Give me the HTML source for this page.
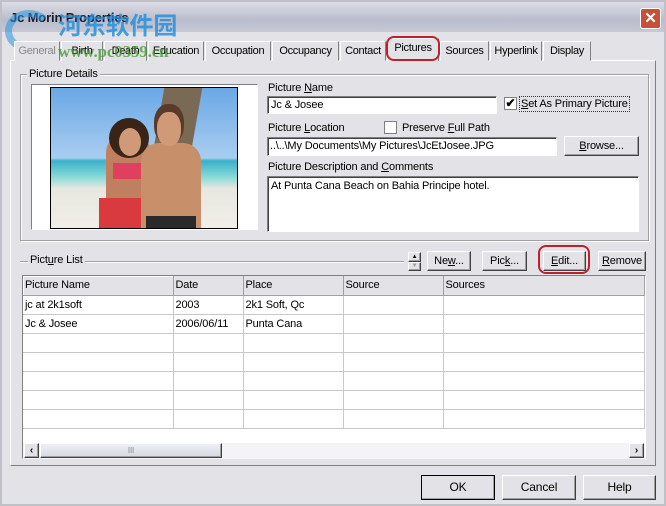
<!DOCTYPE html>
<html><head><meta charset="utf-8"><style>
*{box-sizing:border-box;margin:0;padding:0}
body{width:666px;height:506px;overflow:hidden;background:#e3e2e6;font-family:"Liberation Sans",sans-serif;font-size:11px;color:#000;position:relative;letter-spacing:-0.15px}
.a{position:absolute}
.raised{background:#e3e2e6;border:1px solid;border-color:#fff #404040 #404040 #fff;box-shadow:inset -1px -1px 0 #a0a0a0}
.sunk{background:#fff;border:1px solid;border-color:#808080 #fff #fff #808080;box-shadow:inset 1px 1px 0 #404040}
.btn{position:absolute;text-align:center;line-height:18px;font-size:11px}
.tab{position:absolute;top:41px;height:20px;line-height:18px;text-align:center;border:1px solid;border-color:#fff #808080 transparent #fff;background:#e3e2e6;font-size:11px;letter-spacing:-0.3px}
.grp{position:absolute;border:1px solid #a0a0a0;box-shadow:1px 1px 0 #fff, inset 1px 1px 0 #fff}
.lbl{position:absolute;background:#e3e2e6;padding:0 2px;font-size:11px}
td{border-right:1px solid #c8c8c8;border-bottom:1px solid #c8c8c8;height:19px;padding-left:2px;font-size:11px;white-space:nowrap}
u{text-decoration:underline}
</style></head><body>
<div class="a" style="left:0;top:0;width:666px;height:506px;border:2px solid #c0c0c8"></div>
<div class="a" style="left:2px;top:2px;width:662px;height:30px;background:linear-gradient(#dcdde6,#b9bccb 60%,#c6c8d4)"></div>
<div class="a" style="left:10px;top:10px;font-weight:bold;font-size:13px;color:#1a1a2a">Jc Morin Properties</div>
<div class="a" style="left:5px;top:10px;width:48px;height:42px;border-radius:50%;border:7px solid rgba(40,150,220,.55);border-right-color:transparent"></div>
<div class="a" style="left:58px;top:6px;font-family:'Noto Sans CJK SC',sans-serif;font-weight:bold;font-size:24px;color:rgba(30,140,220,.8)">河东软件园</div>
<div class="a" style="left:640px;top:8px;width:21px;height:21px;background:#c8503a;border:1px solid #fff;border-radius:3px;color:#fff;text-align:center;line-height:19px;font-size:15px;font-weight:bold">✕</div>
<div class="a" style="left:10px;top:60px;width:646px;height:406px;border:1px solid;border-color:#fff #808080 #808080 #fff"></div>
<div class="tab" style="left:14px;width:46px;color:#888">General</div>
<div class="tab" style="left:61px;width:42px">Birth</div>
<div class="tab" style="left:104px;width:43px">Death</div>
<div class="tab" style="left:148px;width:56px">Education</div>
<div class="tab" style="left:205px;width:66px">Occupation</div>
<div class="tab" style="left:272px;width:67px">Occupancy</div>
<div class="tab" style="left:340px;width:46px">Contact</div>
<div class="tab" style="left:387px;top:38px;height:23px;width:52px;border-bottom:none">Pictures</div>
<div class="tab" style="left:440px;width:49px">Sources</div>
<div class="tab" style="left:490px;width:52px">Hyperlink</div>
<div class="tab" style="left:543px;width:48px">Display</div>
<div class="a" style="left:386px;top:36px;width:54px;height:25px;border:2px solid #c0202a;border-radius:8px"></div>
<div class="a" style="left:58px;top:42px;font-family:'Liberation Serif',serif;font-weight:bold;font-size:17px;color:rgba(60,150,40,.75)">www.pc0359.cn</div>
<div class="grp" style="left:20px;top:74px;width:629px;height:167px"></div>
<div class="lbl" style="left:27px;top:68px">Picture Details</div>
<div class="a" style="left:31px;top:84px;width:227px;height:146px;background:#fff;border:1px solid;border-color:#808080 #fff #fff #808080"></div>
<div class="a" style="left:50px;top:87px;width:188px;height:142px;border:1px solid #000;background:linear-gradient(#6aa8e6 0%,#a9cdf0 50%,#3bb0c8 52%,#7ad6d6 62%,#e8e8e0 72%,#f0eee6 100%);overflow:hidden">
<div class="a" style="left:108px;top:0;width:38px;height:60px;background:#7a6a55;transform:skewX(-10deg)"></div>
<div class="a" style="left:55px;top:45px;width:45px;height:95px;background:#c08060;border-radius:20px 20px 0 0"></div>
<div class="a" style="left:58px;top:30px;width:40px;height:40px;background:#3a2418;border-radius:50%"></div>
<div class="a" style="left:68px;top:40px;width:22px;height:28px;background:#d09a78;border-radius:50%"></div>
<div class="a" style="left:48px;top:110px;width:45px;height:32px;background:#d83a40"></div>
<div class="a" style="left:62px;top:75px;width:35px;height:16px;background:#e04060"></div>
<div class="a" style="left:90px;top:55px;width:60px;height:87px;background:#c8906a;border-radius:18px 18px 0 0"></div>
<div class="a" style="left:103px;top:16px;width:30px;height:40px;background:#5a3a28;border-radius:45%"></div>
<div class="a" style="left:106px;top:24px;width:24px;height:34px;background:#d09a78;border-radius:45%"></div>
<div class="a" style="left:95px;top:128px;width:50px;height:14px;background:#2a2a2a"></div>
</div>
<div class="a" style="left:268px;top:82px">Picture <u>N</u>ame</div>
<div class="a sunk" style="left:267px;top:96px;width:230px;height:18px;padding:2px 3px">Jc &amp; Josee</div>
<div class="a" style="left:504px;top:97px;width:13px;height:13px;background:#fff;border:1px solid #808080;font-size:12px;line-height:11px;text-align:center;font-weight:bold">✔</div>
<div class="a" style="left:519px;top:96px;border:1px dotted #333;padding:0 1px;line-height:14px"><u>S</u>et As Primary Picture</div>
<div class="a" style="left:268px;top:122px">Picture <u>L</u>ocation</div>
<div class="a" style="left:384px;top:121px;width:13px;height:13px;background:#fff;border:1px solid #808080"></div>
<div class="a" style="left:402px;top:122px">Preserve <u>F</u>ull Path</div>
<div class="a sunk" style="left:267px;top:137px;width:290px;height:19px;padding:2px 2px">..\..\My Documents\My Pictures\JcEtJosee.JPG</div>
<div class="btn raised" style="left:564px;top:136px;width:75px;height:20px"><u>B</u>rowse...</div>
<div class="a" style="left:268px;top:161px">Picture Description and <u>C</u>omments</div>
<div class="a sunk" style="left:267px;top:176px;width:372px;height:56px;padding:3px 3px">At Punta Cana Beach on Bahia Principe hotel.</div>
<div class="a" style="left:20px;top:261px;width:384px;border-top:1px solid #a0a0a0;border-bottom:1px solid #fff"></div>
<div class="lbl" style="left:28px;top:254px">Pict<u>u</u>re List</div>
<div class="a raised" style="left:408px;top:252px;width:13px;height:10px;font-size:6px;text-align:center;line-height:8px">▲</div>
<div class="a raised" style="left:408px;top:262px;width:13px;height:9px;font-size:6px;text-align:center;line-height:7px;color:#999">▼</div>
<div class="btn raised" style="left:427px;top:251px;width:44px;height:20px">Ne<u>w</u>...</div>
<div class="btn raised" style="left:482px;top:251px;width:45px;height:20px">Pic<u>k</u>...</div>
<div class="btn raised" style="left:543px;top:251px;width:43px;height:20px"><u>E</u>dit...</div>
<div class="a" style="left:538px;top:245px;width:52px;height:29px;border:2px solid #c0202a;border-radius:8px"></div>
<div class="btn raised" style="left:598px;top:251px;width:48px;height:20px"><u>R</u>emove</div>
<div class="a" style="left:22px;top:275px;width:624px;height:184px;background:#fff;border:1px solid;border-color:#808080 #fff #fff #808080;overflow:hidden">
<table style="border-collapse:collapse;width:621px;table-layout:fixed">
<colgroup><col style="width:150px"><col style="width:70px"><col style="width:100px"><col style="width:100px"><col style="width:201px"></colgroup>
<tr style="background:#e3e2e6"><td style="height:18px;border-color:#a0a0a0;box-shadow:inset 1px 1px 0 #fff">Picture Name</td><td style="border-color:#a0a0a0">Date</td><td style="border-color:#a0a0a0">Place</td><td style="border-color:#a0a0a0">Source</td><td style="border-color:#a0a0a0">Sources</td></tr>
<tr><td>jc at 2k1soft</td><td>2003</td><td>2k1 Soft, Qc</td><td></td><td></td></tr>
<tr><td>Jc &amp; Josee</td><td>2006/06/11</td><td>Punta Cana</td><td></td><td></td></tr>
<tr><td></td><td></td><td></td><td></td><td></td></tr>
<tr><td></td><td></td><td></td><td></td><td></td></tr>
<tr><td></td><td></td><td></td><td></td><td></td></tr>
<tr><td></td><td></td><td></td><td></td><td></td></tr>
<tr><td></td><td></td><td></td><td></td><td></td></tr>
</table>
</div>
<div class="a" style="left:23px;top:443px;width:622px;height:16px;background:#f4f4f6"></div>
<div class="a raised" style="left:24px;top:443px;width:15px;height:15px;font-size:10px;text-align:center;line-height:13px;font-weight:bold">‹</div>
<div class="a raised" style="left:40px;top:443px;width:182px;height:15px;background:linear-gradient(#eef0f6,#d6d8e2);font-size:8px;text-align:center;line-height:13px;color:#888">III</div>
<div class="a raised" style="left:629px;top:443px;width:15px;height:15px;font-size:10px;text-align:center;line-height:13px;font-weight:bold">›</div>
<div class="btn raised" style="left:421px;top:475px;width:74px;height:25px;line-height:23px;border:1px solid #000;font-size:12px">OK</div>
<div class="btn raised" style="left:502px;top:475px;width:74px;height:25px;line-height:23px;font-size:12px">Cancel</div>
<div class="btn raised" style="left:583px;top:475px;width:73px;height:25px;line-height:23px;font-size:12px">Help</div>
</body></html>
